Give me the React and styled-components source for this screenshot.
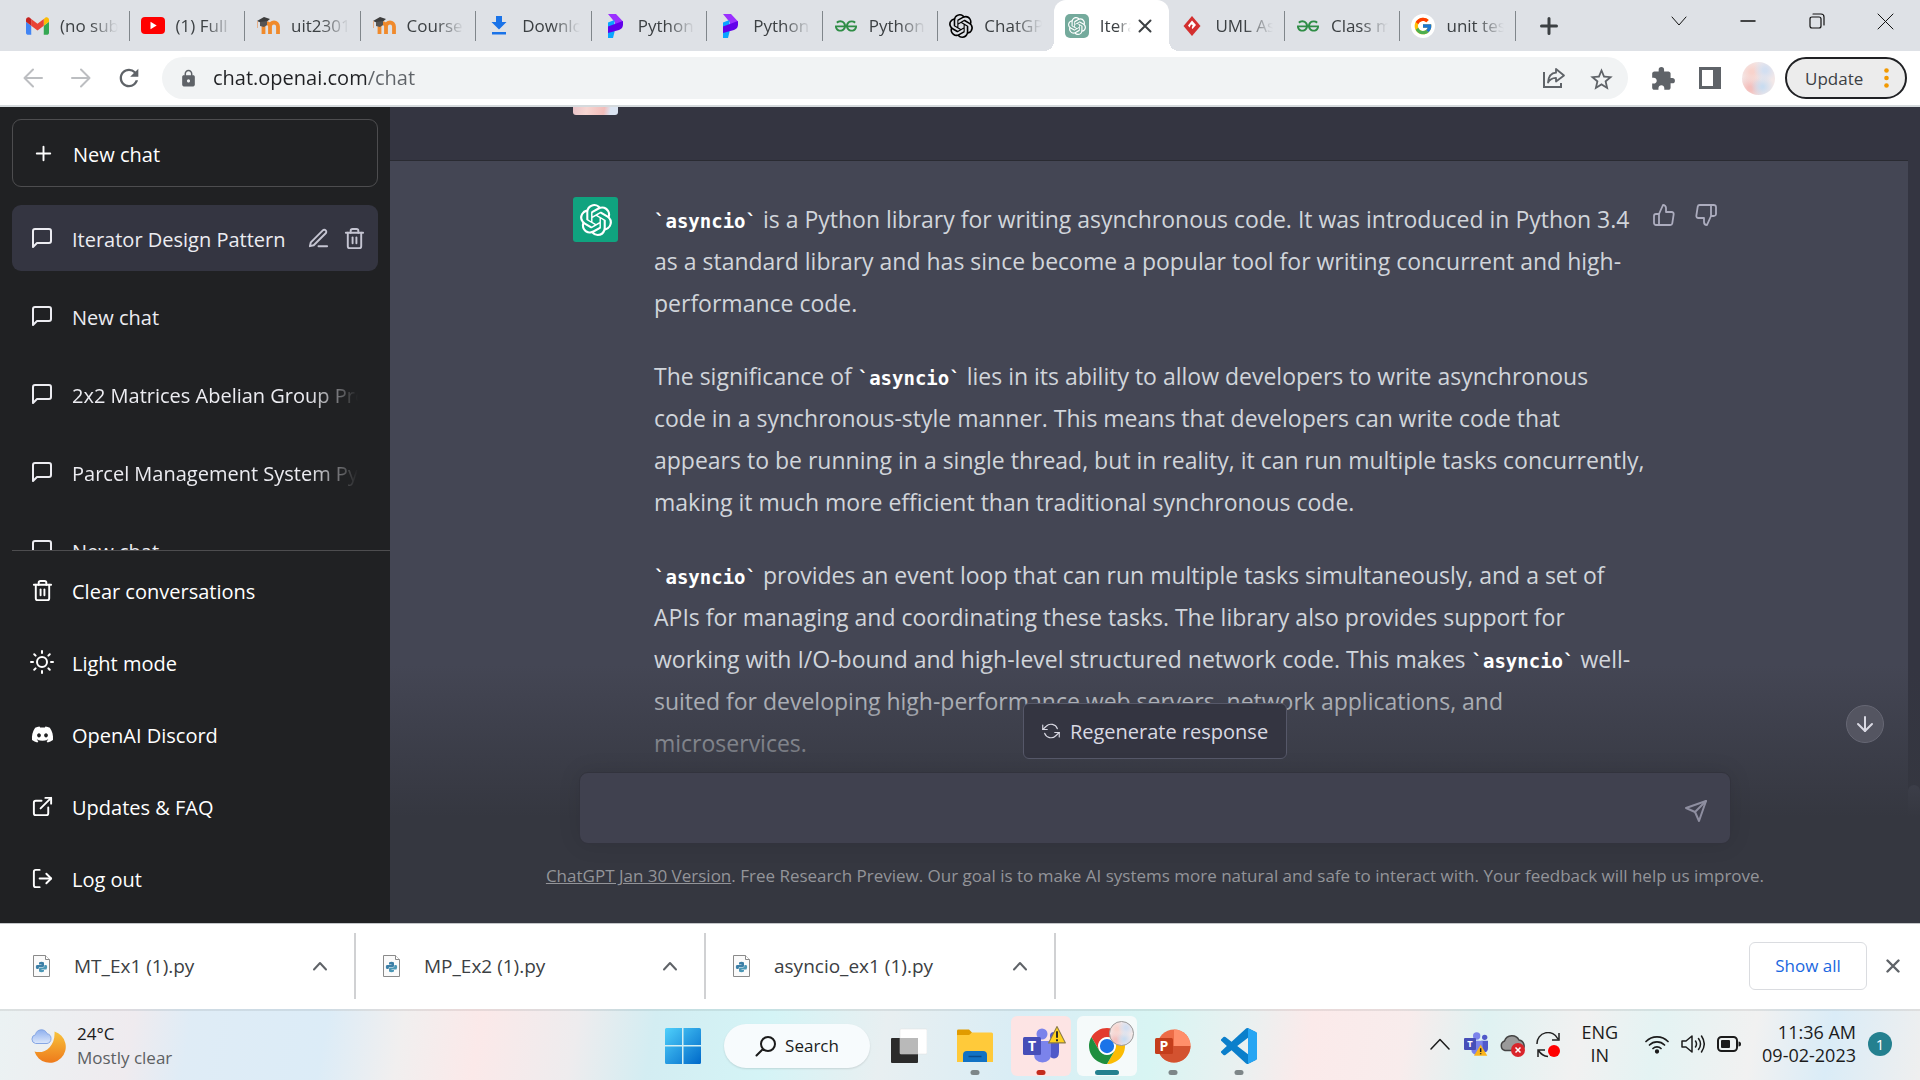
import React from "react";
import styled, { createGlobalStyle, css } from "styled-components";
import {
  FiMessageSquare, FiTrash2, FiEdit3, FiSun, FiExternalLink, FiLogOut,
  FiThumbsUp, FiThumbsDown, FiSend, FiRefreshCcw, FiPlus, FiArrowDown,
} from "react-icons/fi";
import { FaDiscord } from "react-icons/fa";
import { SiOpenai, SiGeeksforgeeks } from "react-icons/si";
import { FcGoogle } from "react-icons/fc";
import { MdRefresh, MdLock, MdStarBorder, MdExtension } from "react-icons/md";

const Global = createGlobalStyle`
  *, *::before, *::after { box-sizing: border-box; }
  body { margin: 0; overflow: hidden; font-family: "Open Sans", "Noto Sans", sans-serif; }
  button, input, textarea { font: inherit; color: inherit; border: 0; padding: 0; margin: 0; background: none; outline: 0; }
  button { cursor: pointer; }
  a { color: inherit; text-decoration: none; }
  svg { display: block; flex: none; }
`;

const marble = css`
  background:
    radial-gradient(circle at 70% 25%, #d3dff1 0 6%, transparent 34%),
    radial-gradient(circle at 30% 30%, #f8d3cc 0 6%, transparent 36%),
    radial-gradient(circle at 62% 75%, #c9dcf0 0 4%, transparent 36%),
    radial-gradient(circle at 25% 80%, #f4c0bd 0 6%, transparent 38%),
    #f3e8e8;
`;

const Screen = styled.div`
  height: 100vh;
  display: flex;
  flex-direction: column;
`;

/* ---------- browser chrome ---------- */
const TabStrip = styled.header`
  display: flex;
  align-items: center;
  height: 51px;
  flex: none;
  padding-left: 14px;
  background: #dee1e6;
  color: #3c4043;
`;
const TabList = styled.nav`
  display: grid;
  grid-template-columns: repeat(13, 1fr);
  flex: 0 1 1502px;
  height: 100%;
  min-width: 0;
`;
const Tab = styled.div`
  position: relative;
  display: flex;
  align-items: center;
  gap: 2px;
  min-width: 0;
  padding: 0 12px 0 11px;
  ${(p) => p.$active ? css`
    background: #fff;
    border-radius: 12px 12px 0 0;
    &::before, &::after {
      content: "";
      position: absolute;
      bottom: 0;
      width: 10px;
      height: 10px;
    }
    &::before { left: -10px; background: radial-gradient(circle at 0 0, transparent 10px, #fff 10px); }
    &::after { right: -10px; background: radial-gradient(circle at 100% 0, transparent 10px, #fff 10px); }
  ` : css`
    &::after {
      content: "";
      position: absolute;
      right: 0;
      top: 11px;
      bottom: 10px;
      width: ${p.$plain ? 0 : 1}px;
      background: #80868b;
    }
  `}
`;
const TabLink = styled.button`
  display: flex;
  align-items: center;
  gap: 11px;
  flex: 1;
  min-width: 0;
  height: 100%;
  font-size: 17px;
  line-height: 24px;
`;
const TabTitle = styled.span`
  flex: 1;
  min-width: 0;
  overflow: hidden;
  white-space: nowrap;
  text-align: left;
  mask-image: linear-gradient(to left, transparent, #000 ${(p) => (p.$active ? 14 : 28)}px);
`;
const TabIcon = styled.span`
  display: grid;
  place-items: center;
  width: 24px;
  height: 24px;
  flex: none;
`;
const IconButton = styled.button`
  display: grid;
  place-items: center;
  flex: none;
  width: ${(p) => p.$w || 24}px;
  height: ${(p) => p.$h || 24}px;
  color: ${(p) => p.$color || "inherit"};
`;
const WindowControls = styled.div`
  display: flex;
  margin-left: auto;
  padding: 0 0 9px;
  color: #111;
`;
const Toolbar = styled.div`
  display: flex;
  align-items: center;
  flex: none;
  height: 56px;
  padding: 0 13px 0 9px;
  border-bottom: 2px solid #d5dadd;
  background: #fff;
  color: #5f6368;
`;
const NavButtons = styled.div`
  display: flex;
  width: 153px;
`;
const Omnibox = styled.div`
  display: flex;
  align-items: center;
  flex: 1;
  height: 42px;
  padding: 0 16px 0 17px;
  border-radius: 21px;
  background: #f1f3f4;
`;
const UrlInput = styled.input`
  flex: 1;
  min-width: 0;
  margin-left: 15px;
  font-size: 20px;
  line-height: 28px;
  color: #5f6368;
  background: linear-gradient(to right, #202124 154px, #5f6368 154px);
  background-clip: text;
  -webkit-text-fill-color: transparent;
`;
const OmniboxActions = styled.div`
  display: flex;
  align-items: center;
  gap: 22px;
`;
const Extensions = styled.div`
  display: flex;
  align-items: center;
  gap: 24px;
  padding: 0 20px 0 22px;
`;
const Profile = styled.div`
  display: flex;
  align-items: center;
  gap: 10px;
`;
const ProfileButton = styled.button`
  width: 33px;
  height: 33px;
  border-radius: 50%;
  ${marble}
`;
const UpdateButton = styled.button`
  display: flex;
  align-items: center;
  justify-content: space-between;
  width: 122px;
  height: 42px;
  padding: 0 16px 0 18px;
  border: 2px solid #202124;
  border-radius: 21px;
  background: #ececec;
  color: #3c4043;
  font-size: 17px;
`;

/* ---------- page ---------- */
const Page = styled.div`
  display: flex;
  flex: 1;
  min-height: 0;
`;
const Sidebar = styled.aside`
  display: flex;
  flex-direction: column;
  width: 390px;
  flex: none;
  padding: 12px 0 9px 12px;
  background: #202123;
  color: #fff;
  font-size: 20px;
  line-height: 30px;
`;
const NewChat = styled.button`
  display: flex;
  align-items: center;
  gap: 18px;
  flex: none;
  height: 68px;
  margin: 0 12px 18px 0;
  padding: 0 19px;
  border: 1px solid #4d4d4f;
  border-radius: 9px;
`;
const ChatList = styled.ul`
  display: flex;
  flex-direction: column;
  gap: 12px;
  flex: 1;
  min-height: 0;
  margin: 0;
  padding: 0 12px 0 0;
  overflow: hidden;
  list-style: none;
  color: #ececf1;
`;
const ChatItem = styled.li`
  display: flex;
  align-items: center;
  flex: none;
  gap: 12px;
  height: 66px;
  padding: 0 12px 0 18px;
  border-radius: 9px;
  background: ${(p) => (p.$active ? "#343541" : "transparent")};
`;
const ChatLink = styled.a`
  display: flex;
  align-items: center;
  gap: 18px;
  flex: 1;
  min-width: 0;
`;
const Label = styled.span`
  padding-top: 3px;
`;
const ChatTitle = styled(Label)`
  flex: 1;
  overflow: hidden;
  white-space: nowrap;
  ${(p) => p.$fade && "mask-image: linear-gradient(to left, transparent 8px, #000 56px);"}
`;
const Menu = styled.nav`
  flex: none;
  padding-top: 3px;
  border-top: 1px solid #4d4d4f;
`;
const MenuLink = styled.a`
  display: flex;
  align-items: center;
  gap: 18px;
  height: 72px;
  padding-left: 18px;
`;
const MenuIcon = styled.span`
  display: grid;
  place-items: center;
  width: 24px;
`;

const Main = styled.main`
  position: relative;
  display: flex;
  flex: 1;
  min-width: 0;
  overflow: hidden;
  background: #343541;
`;
const Thread = styled.div`
  display: flex;
  flex-direction: column;
  flex: 1;
  min-width: 0;
`;
const Turn = styled.section`
  display: flex;
  justify-content: center;
  flex: ${(p) => (p.$reply ? 1 : "none")};
  min-height: 0;
  overflow: hidden;
  padding-top: ${(p) => (p.$reply ? 36 : 0)}px;
  padding-bottom: ${(p) => (p.$reply ? 0 : 45)}px;
  background: ${(p) => (p.$reply ? "#444654" : "#343541")};
  border-bottom: ${(p) => (p.$reply ? "0" : "1px solid #2a2b32")};
`;
const TurnInner = styled.div`
  display: flex;
  gap: 36px;
  flex: 0 1 1152px;
  min-width: 0;
`;
const UserTile = styled.div`
  width: 45px;
  height: 8px;
  border-radius: 0 0 3px 3px;
  background: linear-gradient(100deg, #e9c3c8 0, #f6d6d2 30%, #f2bdba 68%, #dbe4f2 82%);
`;
const BotTile = styled.div`
  display: grid;
  place-items: center;
  width: 45px;
  height: 45px;
  flex: none;
  border-radius: 3px;
  background: #10a37f;
  color: #fff;
`;
const Answer = styled.article`
  flex: 1;
  min-width: 0;
  padding-top: 1px;
  color: #d1d5db;
  font-size: 23px;
  line-height: 42px;
  white-space: nowrap;
  p { margin: 0 0 31px; }
  code {
    font-family: "DejaVu Sans Mono", monospace;
    font-size: 19px;
    font-weight: 700;
    line-height: 1;
    color: #fff;
  }
`;
const Votes = styled.div`
  display: flex;
  flex: none;
  gap: 18px;
  width: 73px;
  height: 36px;
  margin-left: -36px;
  align-items: center;
  color: #acacbe;
`;
const ScrollTrack = styled.div`
  display: flex;
  flex-direction: column;
  justify-content: flex-end;
  width: 12px;
  background: #343541;
`;
const ScrollThumb = styled.div`
  height: 138px;
  border-radius: 6px 6px 0 0;
  background: #565869;
`;
const Composer = styled.div`
  position: absolute;
  left: 0;
  right: 0;
  bottom: 0;
  display: flex;
  flex-direction: column;
  align-items: center;
  padding: 38px 24px 35px;
  background: linear-gradient(180deg, rgba(53, 55, 64, 0), #353740 58.85%);
`;
const Regenerate = styled.button`
  display: flex;
  align-items: center;
  gap: 10px;
  height: 56px;
  padding: 0 18px;
  border: 1px solid #565869;
  border-radius: 6px;
  background: #343541;
  color: #d9d9e3;
  font-size: 20px;
`;
const PromptForm = styled.form`
  display: flex;
  align-items: flex-end;
  width: 100%;
  max-width: 1152px;
  height: 72px;
  margin: 13px 0 20px;
  padding: 0 22px 20px;
  border: 1px solid #32333d;
  border-radius: 9px;
  background: #40414f;
  box-shadow: 0 0 22px rgba(0, 0, 0, 0.1);
  color: #fff;
`;
const Prompt = styled.textarea`
  flex: 1;
  height: 36px;
  resize: none;
  font-size: 23px;
  line-height: 36px;
`;
const Notice = styled.p`
  margin: 0;
  color: #939499;
  font-size: 17px;
  line-height: 24px;
  white-space: nowrap;
  a { text-decoration: underline; }
`;
const ScrollDown = styled.button`
  position: absolute;
  right: 36px;
  bottom: 180px;
  display: grid;
  place-items: center;
  width: 38px;
  height: 38px;
  border: 1px solid #666774;
  border-radius: 50%;
  background: #545561;
  color: #d9d9e3;
`;

/* ---------- downloads ---------- */
const Downloads = styled.section`
  display: flex;
  align-items: center;
  flex: none;
  height: 86px;
  padding: 0 15px 2px 0;
  border-top: 1px solid #c4c6c9;
  background: #fff;
  color: #3c4043;
`;
const Download = styled.div`
  display: flex;
  align-items: center;
  flex: 0 1 350px;
  height: 66px;
  padding: 0 22px 0 27px;
  border-right: 2px solid #d0d1d3;
  &:first-child { flex-basis: 356px; padding-left: 33px; }
`;
const FileLink = styled.a`
  display: flex;
  align-items: center;
  gap: 24px;
  flex: 1;
  font-size: 19px;
  line-height: 28px;
`;
const ShowAll = styled.button`
  width: 118px;
  height: 48px;
  margin: 0 14px 0 auto;
  border: 1px solid #dadce0;
  border-radius: 6px;
  color: #1a67e0;
  font-size: 17px;
`;

/* ---------- taskbar ---------- */
const Taskbar = styled.footer`
  display: grid;
  grid-template-columns: 1fr auto 1fr;
  align-items: center;
  flex: none;
  height: 71px;
  padding: 0 28px 0 30px;
  border-top: 2px solid rgba(0, 0, 0, 0.07);
  color: #1b1b1b;
  background: linear-gradient(100deg, #ebf2f3 0, #efebef 7%, #dfecf6 10%, #dcecf7 17%, #f1efef 21%,
    #fbe9e9 25%, #eeecee 30%, #d3edf2 34%, #d4f4f6 40%, #e8eff1 46%, #d9edf5 53%, #d8f5f3 60%,
    #ebf0f0 65%, #fbeaea 68%, #f8ecec 73%, #dff2f2 77%, #f1f1f1 82%, #e4f3f3 86%, #f1f1f1 91%,
    #daecf7 95%, #efefef 100%);
`;
const Weather = styled.button`
  display: flex;
  align-items: center;
  gap: 11px;
  text-align: left;
  font-size: 17px;
  line-height: 24px;
  justify-self: start;
`;
const Muted = styled.span`
  color: #5c6063;
`;
const Stack = styled.span`
  display: flex;
  flex-direction: column;
`;
const Apps = styled.div`
  display: flex;
  align-items: center;
  gap: 6px;
`;
const AppButton = styled.button`
  position: relative;
  display: grid;
  place-items: center;
  width: 60px;
  height: 60px;
  border-radius: 6px;
  background: ${(p) => p.$bg || "transparent"};
  ${(p) => p.$dot && css`
    &::after {
      content: "";
      position: absolute;
      bottom: 1px;
      left: 50%;
      width: ${p.$wide ? 24 : 9}px;
      height: 5px;
      border-radius: 3px;
      transform: translateX(-50%);
      background: ${p.$dot};
    }
  `}
`;
const SearchPill = styled.button`
  display: flex;
  align-items: center;
  justify-content: center;
  gap: 8px;
  width: 146px;
  height: 44px;
  margin: 0 3px 0 5px;
  border-radius: 22px;
  background: #f7fbfd;
  box-shadow: 0 1px 2px rgba(0, 0, 0, 0.12);
  font-size: 17px;
`;
const MiniAvatar = styled.span`
  position: absolute;
  top: 5px;
  right: 3px;
  width: 25px;
  height: 25px;
  border: 1px solid #999;
  border-radius: 50%;
  ${marble}
`;
const Tray = styled.div`
  display: flex;
  align-items: center;
  justify-content: flex-end;
  gap: 12px;
  padding-bottom: 3px;
  font-size: 18px;
  line-height: 23px;
`;
const TrayText = styled.span`
  display: flex;
  flex-direction: column;
  align-items: ${(p) => p.$align};
  margin: 0 ${(p) => p.$mr}px 0 ${(p) => p.$ml}px;
`;
const Badge = styled.span`
  display: grid;
  place-items: center;
  width: 24px;
  height: 24px;
  border-radius: 50%;
  background: #24808f;
  color: #fff;
  font-size: 15px;
`;

/* ---------- drawings ---------- */
const Gmail = () => (
  <svg width="23" height="18" viewBox="52 42 88 66">
    <path fill="#4285f4" d="M58 108h14V74L52 59v43c0 3.32 2.69 6 6 6" />
    <path fill="#34a853" d="M120 108h14c3.32 0 6-2.69 6-6V59l-20 15" />
    <path fill="#fbbc04" d="M120 48v26l20-15v-8c0-7.42-8.47-11.65-14.4-7.2" />
    <path fill="#ea4335" d="M72 74V48l24 18 24-18v26L96 92" />
    <path fill="#c5221f" d="M52 51v8l20 15V48l-5.6-4.2c-5.94-4.45-14.4-.22-14.4 7.2" />
  </svg>
);
const YouTube = () => (
  <svg width="24" height="17" viewBox="0 0 24 17">
    <rect width="24" height="17" rx="4" fill="#f00" />
    <path d="M9.5 4.8v7.4l6.2-3.7z" fill="#fff" />
  </svg>
);
const Moodle = () => (
  <svg width="24" height="18" viewBox="0 0 24 18">
    <path d="M6 17V9.500a3.200 3.200 0 0 1 6.500 0V17M12.500 9.500a3.800 3.800 0 0 1 8 0V17" transform="translate(1.500 0)" fill="none" stroke="#f08a2c" strokeWidth="3.800" />
    <path d="M1 4l7-4 6 2-6 5z" fill="#3d3d3d" />
    <path d="M4 5v4l4 1 3-2V4z" fill="#555" />
    <path d="M1.500 4v7" stroke="#e7b089" strokeWidth="1" />
  </svg>
);
const DownloadMark = () => (
  <svg width="16" height="19" viewBox="0 0 16 19" fill="#1a73e8">
    <path d="M5 0h6v6h4.500L8 13.500.500 6H5zM1 16h14v2.500H1z" />
  </svg>
);
const Programiz = () => (
  <svg width="18" height="24" viewBox="0 0 18 24">
    <path d="M2 0h8l7 7.500-8 5.500V8.500z" fill="#9b30ff" />
    <path d="M2 8.500L8.500 6v12L7 24H2z" fill="#0aa5ff" />
    <path d="M2 12.500L17 7v3.500q0 4-4 5.500L2 19z" fill="#6200ea" />
  </svg>
);
const Diamond = () => (
  <svg width="18" height="20" viewBox="0 0 18 20">
    <path d="M9 0l8.500 10L9 20 .5 10z" fill="#d32f2f" />
    <path d="M5 9.500l4-5 4 4.500-3.500 4-.800-1 1-3-1.700-.5-1.500 3z" fill="#fff" />
  </svg>
);
const Share = () => (
  <svg width="24" height="24" viewBox="0 0 24 24" fill="none" stroke="currentColor" strokeWidth="2">
    <path d="M2 6v15h17v-4" />
    <path d="M14 3l8 6.500-8 6v-3.700C9 12 7.500 13.500 6 16.500 6.500 10 9.500 7 14 6.700z" strokeWidth="1.800" strokeLinejoin="round" />
  </svg>
);
const SidePanel = () => (
  <svg width="22" height="22" viewBox="0 0 22 22">
    <rect x="1.500" y="1.500" width="19" height="19" fill="none" stroke="currentColor" strokeWidth="3" />
    <rect x="14" y="1" width="7" height="20" fill="currentColor" />
  </svg>
);
const Stroke = ({ w = 16, h = 16, d, sw = 1.5, color = "currentColor" }) => (
  <svg width={w} height={h} viewBox={`0 0 ${w} ${h}`} fill="none" stroke={color} strokeWidth={sw} strokeLinecap="round" strokeLinejoin="round">
    <path d={d} />
  </svg>
);
const Dots = () => (
  <svg width="5" height="20" viewBox="0 0 5 20" fill="#f29900">
    <circle cx="2.500" cy="2.500" r="2.300" /><circle cx="2.500" cy="10" r="2.300" /><circle cx="2.500" cy="17.500" r="2.300" />
  </svg>
);
const PyFile = () => (
  <svg width="17" height="22" viewBox="0 0 17 22">
    <path d="M.5.5h12l4 4v17H.5z" fill="#fafafa" stroke="#8a8a8a" />
    <path d="M12.500.5v4h4" fill="#fff" stroke="#8a8a8a" />
    <path d="M6 7.500q2.500-1.500 5 0V11q0 1-1 1H7q-1.500 0-1.500 2H3.500q-1.500-2 0-4H8.500V9.500H6z" fill="#3b7ea6" />
    <path d="M11 16.500q-2.500 1.500-5 0V14q0-1.500 1-1.500h3q1.500 0 1.500-2.500h2q1.500 2 0 4.500H8.500v.5H11z" fill="#4a96b5" />
  </svg>
);
const Moon = () => (
  <svg width="36" height="36" viewBox="0 0 36 36">
    <defs>
      <linearGradient id="moon" x1="0" y1="0" x2="0" y2="1"><stop offset="0" stopColor="#f8c33c" /><stop offset="1" stopColor="#ee7a1b" /></linearGradient>
      <linearGradient id="cloud" x1="0" y1="0" x2="0" y2="1"><stop offset="0" stopColor="#8fb0ee" /><stop offset="1" stopColor="#dbe7fb" /></linearGradient>
    </defs>
    <path d="M24.500 3.500A16 16 0 1 1 4.500 23.500c10 3 21-5 20-20z" fill="url(#moon)" />
    <path d="M5.500 15.500a4.500 4.500 0 0 1 0-8.800 6 6 0 0 1 11.500-1 5 5 0 0 1 0 9.800z" fill="url(#cloud)" stroke="#86a6e4" strokeWidth="1" />
  </svg>
);
const Windows = () => (
  <svg width="36" height="36" viewBox="0 0 36 36">
    <defs><linearGradient id="win" x1="0" y1="0" x2="1" y2="1"><stop offset="0" stopColor="#4fd0fb" /><stop offset="1" stopColor="#0069c9" /></linearGradient></defs>
    <path d="M1.500 0H17v17H0V1.500Q0 0 1.500 0zM18.500 0h16Q36 0 36 1.500V17H18.500zM0 18.500h17V36H1.500Q0 36 0 34.500zM18.500 18.500H36v16q0 1.500-1.500 1.500h-16z" fill="url(#win)" />
  </svg>
);
const TaskView = () => (
  <svg width="36" height="36" viewBox="0 0 36 36">
    <rect x="0" y="10" width="27" height="25" rx="1" fill="#2b2b2b" />
    <rect x="9" y="1" width="27" height="25" rx="1" fill="#fff" stroke="#ddd" strokeWidth=".5" />
    <path d="M9 10h18v16H9z" fill="#b9b9b9" />
  </svg>
);
const Explorer = () => (
  <svg width="36" height="34" viewBox="0 0 36 34">
    <path d="M0 1.500Q0 .5 1.500.5H12l3 3-3 4H0z" fill="#e19b00" />
    <path d="M0 6h12l3-2.500h19.500Q36 3.500 36 5v28H0z" fill="#ffca3a" />
    <path d="M6 33v-7q0-4 4-4h16q4 0 4 4v7z" fill="#1272c4" />
    <path d="M11.500 27.500h13" stroke="#0a4c8c" strokeWidth="1.500" />
  </svg>
);
const Teams = ({ size = 36, alert }) => (
  <svg width={size} height={size} viewBox="0 0 36 36">
    <circle cx="19" cy="6" r="5.500" fill="#7b83eb" />
    <circle cx="31" cy="8" r="4" fill="#5059c9" />
    <path d="M26 13h10v11q0 6-5 6.500-5-.5-5-6z" fill="#5059c9" />
    <path d="M11 13h17v13q0 8-8.500 8.500Q11 34 11 26z" fill="#7b83eb" />
    <rect x="0" y="9" width="18" height="18" rx="1.500" fill="#464eb8" />
    <text x="9" y="23" fill="#fff" fontSize="14" fontWeight="700" textAnchor="middle">T</text>
    {alert && <g><path d="M25 19l10 16.500H15z" fill="#fbb51a" /><path d="M25 24.500v5.500M25 32v1.500" stroke="#222" strokeWidth="2.200" /></g>}
  </svg>
);
const WarnSlot = styled.span`
  position: absolute;
  top: 9px;
  right: 4px;
`;
const Warn = () => (
  <svg width="20" height="20" viewBox="0 0 19 19">
    <path d="M9.500 1.500l8 15.500h-16z" fill="#ffd21f" stroke="#8a7a4a" strokeWidth="1" strokeLinejoin="round" />
    <path d="M9.500 6v6M9.500 13.500v2" stroke="#222" strokeWidth="1.800" />
  </svg>
);
const Chrome = () => (
  <svg width="36" height="36" viewBox="0 0 48 48">
    <circle cx="24" cy="24" r="12" fill="#fff" />
    <path fill="#e33b2e" d="M24 12H44.780a24 24 0 0 0-41.560 0L13.610 30A12 12 0 0 1 24 12Z" />
    <path fill="#fbbc04" d="M34.390 30 24 48A24 24 0 0 0 44.780 12H24A12 12 0 0 1 34.390 30Z" />
    <path fill="#1e8e3e" d="M13.610 30 3.220 12A24 24 0 0 0 24 48L34.390 30a12 12 0 0 1-20.780 0Z" />
    <circle cx="24" cy="24" r="9.500" fill="#1a73e8" />
  </svg>
);
const PowerPoint = () => (
  <svg width="36" height="34" viewBox="0 0 36 34">
    <circle cx="19" cy="17" r="16.500" fill="#ed6c47" />
    <path d="M19 .5A16.500 16.500 0 0 1 35.500 17H19z" fill="#ff8f6b" />
    <path d="M2.500 17h33a16.500 16.500 0 0 1-33 0z" fill="#d35230" />
    <rect y="9" width="18" height="16" rx="1.500" fill="#c43e1c" />
    <text x="9" y="22" fill="#fff" fontSize="14" fontWeight="700" textAnchor="middle">P</text>
  </svg>
);
const VsCode = () => (
  <svg width="36" height="36" viewBox="0 0 24 24">
    <path fill="#0b7fcb" d="M23.150 2.587L18.210.21a1.494 1.494 0 0 0-1.705.29l-9.460 8.630-4.120-3.128a1 1 0 0 0-1.276.057L.327 7.261A1 1 0 0 0 .326 8.740L3.899 12 .326 15.260a1 1 0 0 0 .001 1.479L1.650 17.940a1 1 0 0 0 1.276.057l4.120-3.128 9.460 8.630a1.492 1.492 0 0 0 1.704.290l4.942-2.377A1.500 1.500 0 0 0 24 20.060V3.939a1.500 1.500 0 0 0-.850-1.352zm-5.146 14.861L10.826 12l7.178-5.448v10.896z" />
    <path fill="#26a5f3" d="M18 .2l5.200 2.400q.8.4.8 1.400v16q0 1-.8 1.400L18 23.800z" />
  </svg>
);
const Cloud = () => (
  <svg width="26" height="26" viewBox="0 0 26 26">
    <path d="M5 18.500a5 5 0 0 1-.5-9.500A8 8 0 0 1 19 8a6 6 0 0 1 3 10.500z" fill="#9a9a9a" stroke="#444" strokeWidth="1.500" />
    <circle cx="18" cy="18" r="7" fill="#d9252b" />
    <path d="M15.500 15.500l5 5M20.500 15.500l-5 5" stroke="#fff" strokeWidth="1.500" />
  </svg>
);
const Sync = () => (
  <svg width="24" height="26" viewBox="0 0 24 26" fill="none" stroke="#222" strokeWidth="1.500">
    <path d="M1 12A11 11 0 0 1 22 7M23 1v7h-7M2 25v-7h7M2.500 18.500Q6 24 12 24.500" />
    <circle cx="18" cy="19" r="6" fill="#f00" stroke="none" />
  </svg>
);
const Wifi = () => (
  <svg width="24" height="20" viewBox="0 0 24 20" fill="none" stroke="#1b1b1b" strokeWidth="1.700" strokeLinecap="round">
    <path d="M1 7.500a15.500 15.500 0 0 1 22 0M4.500 11a10.500 10.500 0 0 1 15 0M8 14.500a5.600 5.600 0 0 1 8 0" />
    <circle cx="12" cy="17.500" r="1.300" fill="#1b1b1b" />
  </svg>
);
const Volume = () => (
  <svg width="24" height="22" viewBox="0 0 24 22" fill="none" stroke="#1b1b1b" strokeWidth="1.500" strokeLinejoin="round" strokeLinecap="round">
    <path d="M1 8v6h4l6 5V3L5 8zM14.500 8q2 3 0 6M17.500 5.500q4 5.500 0 11M20.500 3q5.500 8 0 16" />
  </svg>
);
const Battery = () => (
  <svg width="24" height="16" viewBox="0 0 24 16">
    <rect x="1" y="1" width="19" height="14" rx="3.500" fill="none" stroke="#1b1b1b" strokeWidth="2" />
    <rect x="4" y="4" width="9" height="8" rx="1" fill="#1b1b1b" />
    <path d="M21.500 5.500q2.500 0 2.500 2.500t-2.500 2.500z" fill="#1b1b1b" />
  </svg>
);
const GptSquare = styled.span`
  display: grid;
  place-items: center;
  width: 24px;
  height: 24px;
  border-radius: 5px;
  background: #74aa9c;
  color: #fff;
`;
const GoogleDisc = styled.span`
  display: grid;
  place-items: center;
  width: 24px;
  height: 24px;
  border-radius: 50%;
  background: #fff;
`;

const gfg = <SiGeeksforgeeks size={22} color="#2f8d46" />;
const tabs = [
  { title: "(no subject)", icon: <Gmail /> },
  { title: "(1) Full Stack", icon: <YouTube /> },
  { title: "uit2301", icon: <Moodle /> },
  { title: "Course: UIT", icon: <Moodle /> },
  { title: "Downloads", icon: <DownloadMark /> },
  { title: "Python As", icon: <Programiz /> },
  { title: "Python As", icon: <Programiz /> },
  { title: "Python As", icon: gfg },
  { title: "ChatGPT", icon: <SiOpenai size={24} color="#000" />, plain: true },
  { title: "Iterator", icon: <GptSquare><SiOpenai size={18} /></GptSquare>, active: true },
  { title: "UML Asso", icon: <Diamond /> },
  { title: "Class meth", icon: gfg },
  { title: "unit testing", icon: <GoogleDisc><FcGoogle size={20} /></GoogleDisc> },
];
const chats = [
  "New chat",
  "2x2 Matrices Abelian Group Proof",
  "Parcel Management System Python",
  "New chat",
];
const menu = [
  ["Clear conversations", <FiTrash2 size={23} />],
  ["Light mode", <FiSun size={24} />],
  ["OpenAI Discord", <FaDiscord size={23} />],
  ["Updates & FAQ", <FiExternalLink size={23} />],
  ["Log out", <FiLogOut size={23} />],
];
const files = ["MT_Ex1 (1).py", "MP_Ex2 (1).py", "asyncio_ex1 (1).py"];
const Asyncio = () => <code>`asyncio`</code>;

export default function App() {
  return (
    <Screen>
      <Global />
      <TabStrip>
        <TabList aria-label="Tabs">
          {tabs.map((t, i) => (
            <Tab key={i} $active={t.active} $plain={t.plain}>
              <TabLink type="button">
                <TabIcon>{t.icon}</TabIcon>
                <TabTitle $active={t.active}>{t.title}</TabTitle>
              </TabLink>
              {t.active && <IconButton $color="#3c4043" aria-label="Close tab"><Stroke w={14} h={14} sw={2} d="M1.500 1.500l11 11M12.500 1.500l-11 11" /></IconButton>}
            </Tab>
          ))}
        </TabList>
        <IconButton $w={66} aria-label="New tab"><Stroke w={18} h={18} sw={3} d="M9 1.500v15M1.500 9h15" /></IconButton>
        <WindowControls>
          <IconButton $w={69} aria-label="Search tabs"><Stroke w={16} h={10} sw={1} d="M1 1l7 8 7-8" /></IconButton>
          <IconButton $w={69} aria-label="Minimise"><Stroke w={16} h={4} sw={1.5} d="M1 2h14" /></IconButton>
          <IconButton $w={69} aria-label="Restore"><Stroke w={16} h={16} sw={1.2} d="M3 4h7q2 0 2 2v7q0 2-2 2H3q-2 0-2-2V6q0-2 2-2zM4 1h8q3 0 3 3v8" /></IconButton>
          <IconButton $w={69} aria-label="Close window"><Stroke w={17} h={17} sw={1} d="M1 1l15 15M16 1L1 16" /></IconButton>
        </WindowControls>
      </TabStrip>
      <Toolbar>
        <NavButtons>
          <IconButton $w={48} $h={42} $color="#bcbec1" aria-label="Back"><Stroke w={20} h={20} sw={2} d="M19 10H2M10 1.500L1.500 10l8.500 8.500" /></IconButton>
          <IconButton $w={48} $h={42} $color="#bcbec1" aria-label="Forward"><Stroke w={20} h={20} sw={2} d="M1 10h17M10 1.500l8.500 8.500-8.500 8.500" /></IconButton>
          <IconButton $w={48} $h={42} aria-label="Reload"><MdRefresh size={28} /></IconButton>
        </NavButtons>
        <Omnibox>
          <MdLock size={19} />
          <UrlInput aria-label="Address" defaultValue="chat.openai.com/chat" />
          <OmniboxActions>
            <IconButton aria-label="Share"><Share /></IconButton>
            <IconButton aria-label="Bookmark"><MdStarBorder size={27} /></IconButton>
          </OmniboxActions>
        </Omnibox>
        <Extensions>
          <IconButton aria-label="Extensions"><MdExtension size={26} /></IconButton>
          <IconButton aria-label="Side panel"><SidePanel /></IconButton>
        </Extensions>
        <Profile>
          <ProfileButton aria-label="Profile" />
          <UpdateButton>Update<Dots /></UpdateButton>
        </Profile>
      </Toolbar>

      <Page>
        <Sidebar>
          <NewChat><FiPlus size={23} /><Label>New chat</Label></NewChat>
          <ChatList>
            <ChatItem $active>
              <ChatLink href="#"><FiMessageSquare size={24} /><ChatTitle>Iterator Design Pattern</ChatTitle></ChatLink>
              <IconButton $color="#c5c5d2" aria-label="Rename"><FiEdit3 size={23} /></IconButton>
              <IconButton $color="#c5c5d2" aria-label="Delete"><FiTrash2 size={23} /></IconButton>
            </ChatItem>
            {chats.map((c, i) => (
              <ChatItem key={i}>
                <ChatLink href="#"><FiMessageSquare size={24} /><ChatTitle $fade={c.length > 12}>{c}</ChatTitle></ChatLink>
              </ChatItem>
            ))}
          </ChatList>
          <Menu>
            {menu.map(([label, icon]) => (
              <MenuLink href="#" key={label}><MenuIcon>{icon}</MenuIcon><Label>{label}</Label></MenuLink>
            ))}
          </Menu>
        </Sidebar>

        <Main>
          <Thread>
            <Turn><TurnInner><UserTile /></TurnInner></Turn>
            <Turn $reply>
              <TurnInner>
                <BotTile><SiOpenai size={32} /></BotTile>
                <Answer>
                  <p>
                    <Asyncio /> is a Python library for writing asynchronous code. It was introduced in Python 3.4<br />
                    as a standard library and has since become a popular tool for writing concurrent and high-<br />
                    performance code.
                  </p>
                  <p>
                    The significance of <Asyncio /> lies in its ability to allow developers to write asynchronous<br />
                    code in a synchronous-style manner. This means that developers can write code that<br />
                    appears to be running in a single thread, but in reality, it can run multiple tasks concurrently,<br />
                    making it much more efficient than traditional synchronous code.
                  </p>
                  <p>
                    <Asyncio /> provides an event loop that can run multiple tasks simultaneously, and a set of<br />
                    APIs for managing and coordinating these tasks. The library also provides support for<br />
                    working with I/O-bound and high-level structured network code. This makes <Asyncio /> well-<br />
                    suited for developing high-performance web servers, network applications, and<br />
                    microservices.
                  </p>
                </Answer>
                <Votes>
                  <IconButton aria-label="Good response"><FiThumbsUp size={24} strokeWidth={1.8} /></IconButton>
                  <IconButton aria-label="Bad response"><FiThumbsDown size={24} strokeWidth={1.8} /></IconButton>
                </Votes>
              </TurnInner>
            </Turn>
          </Thread>
          <ScrollTrack><ScrollThumb /></ScrollTrack>
          <Composer>
            <Regenerate><FiRefreshCcw size={18} strokeWidth={1.5} />Regenerate response</Regenerate>
            <PromptForm onSubmit={(e) => e.preventDefault()}>
              <Prompt aria-label="Message" rows={1} />
              <IconButton $color="#8e8ea0" aria-label="Send"><FiSend size={24} /></IconButton>
            </PromptForm>
            <Notice>
              <a href="#">ChatGPT Jan 30 Version</a>. Free Research Preview. Our goal is to make AI systems more natural and safe to interact with. Your feedback will help us improve.
            </Notice>
          </Composer>
          <ScrollDown aria-label="Scroll to bottom"><FiArrowDown size={24} /></ScrollDown>
        </Main>
      </Page>

      <Downloads>
        {files.map((f) => (
          <Download key={f}>
            <FileLink href="#"><PyFile />{f}</FileLink>
            <IconButton aria-label="File options"><Stroke w={16} h={10} sw={2} color="#5f6368" d="M2 8.500l6-6.500 6 6.500" /></IconButton>
          </Download>
        ))}
        <ShowAll>Show all</ShowAll>
        <IconButton $color="#5f6368" aria-label="Close downloads"><Stroke w={14} h={14} sw={2.4} d="M1.500 1.500l11 11M12.500 1.500l-11 11" /></IconButton>
      </Downloads>

      <Taskbar>
        <Weather>
          <Moon />
          <Stack><span>24°C</span><Muted>Mostly clear</Muted></Stack>
        </Weather>
        <Apps>
          <AppButton aria-label="Start"><Windows /></AppButton>
          <SearchPill>
            <Stroke w={22} h={22} sw={2} d="M20 9a7 7 0 1 1-14 0 7 7 0 1 1 14 0zM8 14l-6.500 6.500" />
            Search
          </SearchPill>
          <AppButton aria-label="Task view"><TaskView /></AppButton>
          <AppButton $dot="#7d8688" aria-label="File Explorer"><Explorer /></AppButton>
          <AppButton $bg="#fde4e4" $dot="#c42b1c" aria-label="Teams"><Teams /><WarnSlot><Warn /></WarnSlot></AppButton>
          <AppButton $bg="#f5fafa" $dot="#24808f" $wide aria-label="Chrome"><Chrome /><MiniAvatar /></AppButton>
          <AppButton $dot="#7d8688" aria-label="PowerPoint"><PowerPoint /></AppButton>
          <AppButton $dot="#7d8688" aria-label="Visual Studio Code"><VsCode /></AppButton>
        </Apps>
        <Tray>
          <IconButton aria-label="Hidden icons"><Stroke w={20} h={12} sw={1.5} d="M1 11l9-9.500 9 9.500" /></IconButton>
          <IconButton aria-label="Teams status"><Teams size={24} alert /></IconButton>
          <IconButton aria-label="OneDrive"><Cloud /></IconButton>
          <IconButton aria-label="Sync"><Sync /></IconButton>
          <TrayText $align="center" $ml={9} $mr={15}><span>ENG</span><span>IN</span></TrayText>
          <IconButton aria-label="Network"><Wifi /></IconButton>
          <IconButton aria-label="Volume"><Volume /></IconButton>
          <IconButton aria-label="Battery"><Battery /></IconButton>
          <TrayText $align="flex-end" $ml={9} $mr={0}><span>11:36 AM</span><span>09-02-2023</span></TrayText>
          <Badge>1</Badge>
        </Tray>
      </Taskbar>
    </Screen>
  );
}
